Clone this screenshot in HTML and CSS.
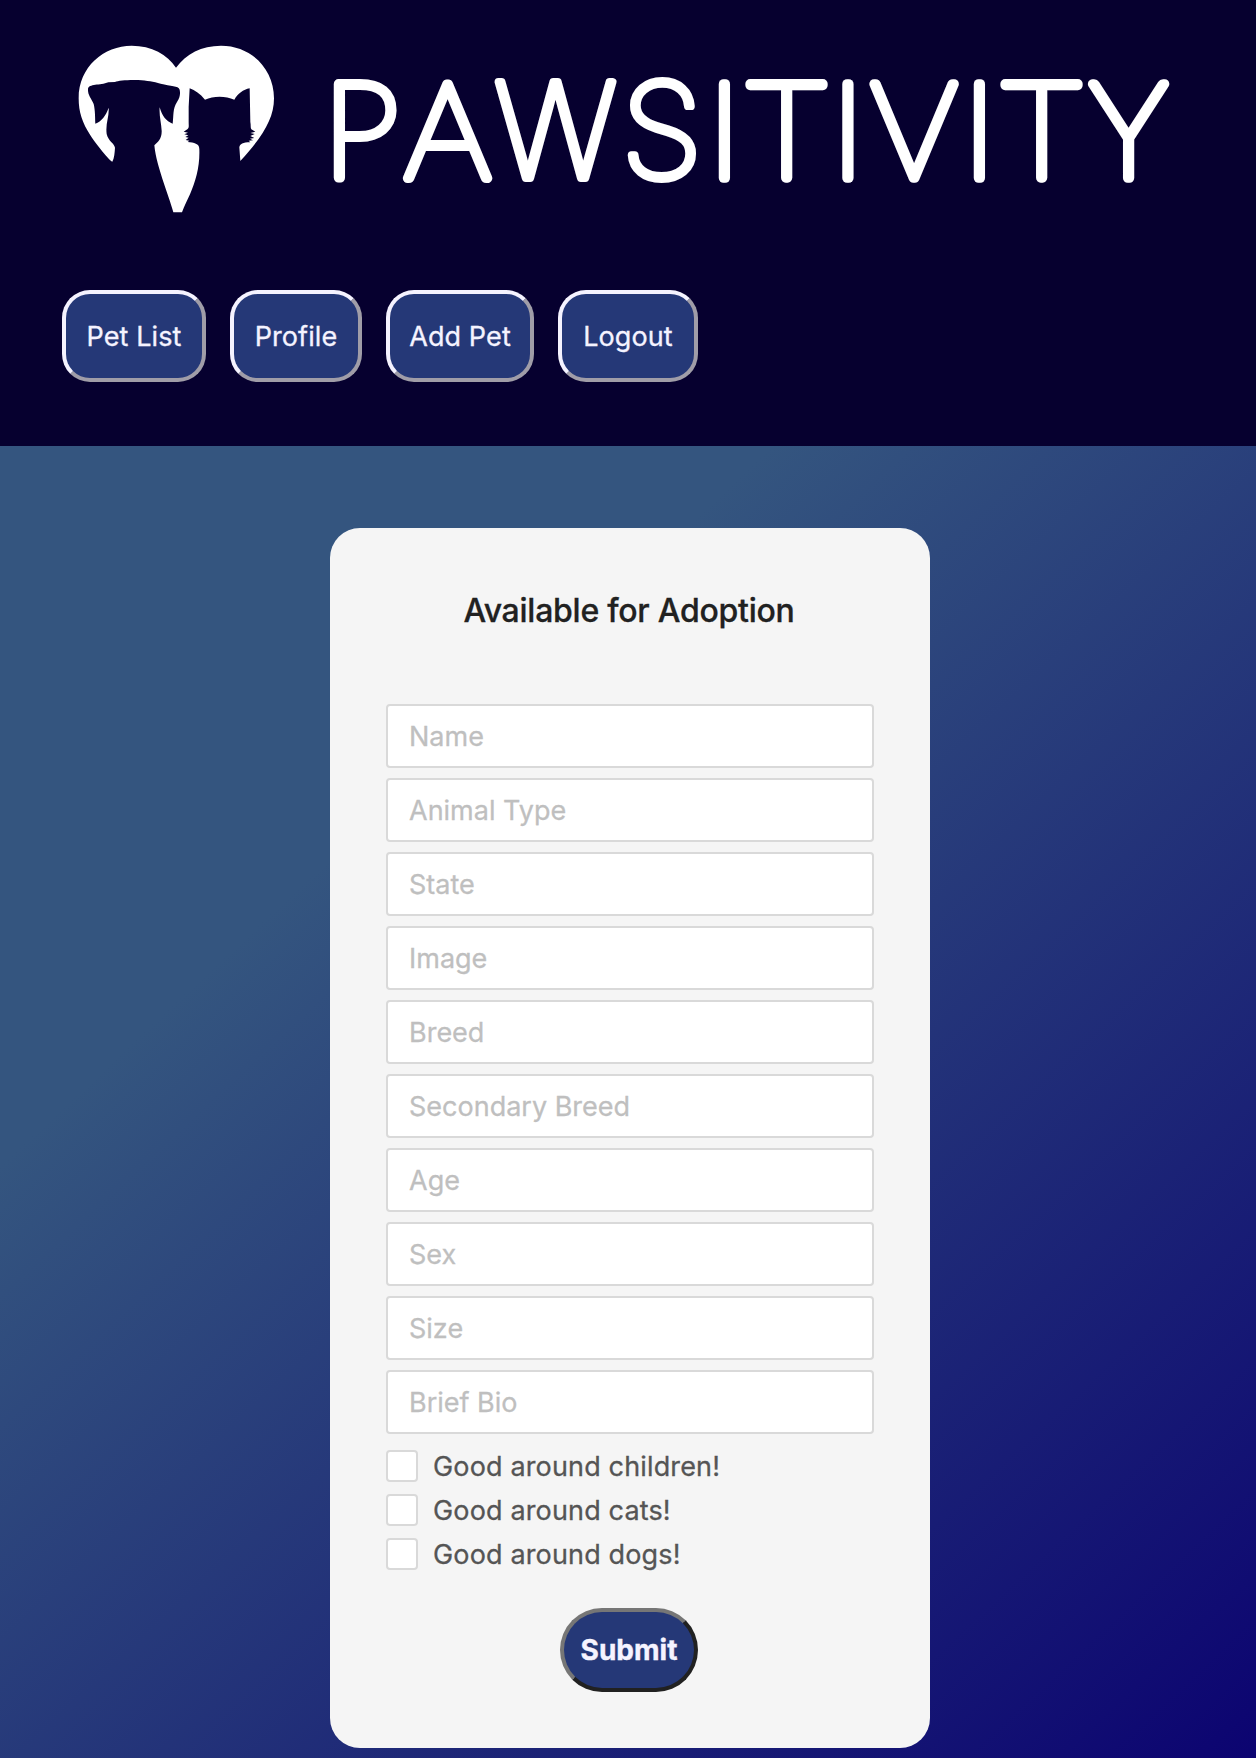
FILE: index.html
```html
<!DOCTYPE html>
<html lang="en">
<head>
<meta charset="utf-8">
<title>Pawsitivity</title>
<link rel="stylesheet" href="styles.css">
</head>
<body>
<header class="header">
  <svg class="logo" viewBox="0 0 1256 230" role="img" aria-label="Pawsitivity">
    <g transform="translate(60 30) scale(.33333)">
      <path fill="#fff" d="M157 395C146 389 112 347 92 317C66 278 56 245 56 205C56 110 132 47 215 47C275 47 322 73 348 113C378 72 425 47 483 47C574 47 642 117 642 205C642 267 607 321 541 393L538 352C540 342 548 337 571 337L566 332L579 331L570 326L583 324L571 318L584 312L571 309L586 305L574 298C571 293 573 286 571 276L569 175C550 179 533 191 523 209C497 197 460 197 435 209C420 191 405 181 389 175L386 230V276C386 288 388 293 382 298L371 305L384 308L373 313L385 316L376 321L386 323L377 330L388 332L383 336C402 338 418 340 418 357C420 410 407 453 390 493C382 510 374 525 366 547H340C333 520 318 480 307 446C297 412 287 385 283 346C294 336 306 326 305 302C304 280 297 255 299 232C306 257 318 274 338 281C341 258 338 235 351 216C361 201 361 190 359 179C355 166 332 169 302 161C280 155 262 152 235 150C205 149 175 151 165 156L145 157C120 167 86 161 84 177C83 197 94 204 101 222C106 242 105 265 106 281C125 274 137 258 146 233C148 260 136 280 140 312C145 334 163 340 165 353C164 368 163 384 157 395Z"/>
    </g>
    <text class="wordmark" y="178" x="360.5 447.5 555.5 662 724.5 786.5 848 914 979.5 1041.5 1128.5">PA<tspan class="narrow">WS</tspan>ITIVITY</text>
  </svg>
  <nav class="nav">
    <a class="nav-button pet-list">Pet List</a>
    <a class="nav-button profile">Profile</a>
    <a class="nav-button add-pet">Add Pet</a>
    <a class="nav-button logout">Logout</a>
  </nav>
</header>
<main class="main">
  <form class="card">
    <h1 class="title">Available for Adoption</h1>
    <div class="fields">
      <input class="field" placeholder="Name">
      <input class="field" placeholder="Animal Type">
      <input class="field" placeholder="State">
      <input class="field" placeholder="Image">
      <input class="field" placeholder="Breed">
      <input class="field" placeholder="Secondary Breed">
      <input class="field" placeholder="Age">
      <input class="field" placeholder="Sex">
      <input class="field" placeholder="Size">
      <input class="field" placeholder="Brief Bio">
    </div>
    <div class="checks">
      <label class="check"><input class="box" type="checkbox"><span>Good around children!</span></label>
      <label class="check"><input class="box" type="checkbox"><span>Good around cats!</span></label>
      <label class="check"><input class="box" type="checkbox"><span>Good around dogs!</span></label>
    </div>
    <button class="submit" type="button">Submit</button>
  </form>
</main>
</body>
</html>
```
FILE: styles.css
```css
* { box-sizing: border-box; }
body {
  margin: 0;
  height: 1758px;
  overflow: hidden;
  font-family: Inter, "Liberation Sans", sans-serif;
  font-size: 27px;
  font-weight: 400;
  background: #0a0070;
}
.header { height: 446px; background: #06002f; }
.logo { display: block; width: 1256px; height: 230px; }
.wordmark {
  font-family: Lato, sans-serif;
  font-size: 134.5px;
  font-weight: 100;
  fill: #fff;
  stroke: #fff;
  stroke-width: 9.6px;
  stroke-linejoin: round;
  text-anchor: middle;
}
.narrow {
  font-family: Inter, sans-serif;
  font-size: 132px;
  stroke-width: 7.8px;
}
.nav { display: flex; gap: 24px; padding: 60px 62px 0; }
.nav-button {
  display: flex;
  align-items: center;
  justify-content: center;
  height: 92px;
  border: 4px solid;
  border-color: #f5f3ff #a09da8 #a09da8 #f5f3ff;
  border-radius: 28px;
  background: #253877;
  color: #f5f3ff;
  letter-spacing: 0.1px;
  -webkit-text-stroke: 0.3px;
}
.pet-list { width: 144px; }
.profile { width: 132px; }
.add-pet { width: 148px; }
.logout { width: 140px; }
.main {
  display: flex;
  justify-content: center;
  height: 1312px;
  padding: 82px 0 0 4px;
  background: linear-gradient(137deg, #34557f 29%, #0a0070 103%);
}
.card {
  display: flex;
  flex-direction: column;
  align-items: center;
  width: 600px;
  height: 1220px;
  padding: 63px 56px 0;
  border-radius: 30px;
  background: #f5f5f5;
}
.title {
  margin: 0 2px 73px 0;
  font-size: 32px;
  font-weight: 500;
  line-height: 40px;
  letter-spacing: -0.25px;
  color: #212121;
  -webkit-text-stroke: 0.3px;
}
.fields { display: flex; flex-direction: column; gap: 10px; width: 100%; }
.field {
  width: 100%;
  height: 64px;
  padding: 0 21px;
  border: 2px solid #d9d9d9;
  border-radius: 4px;
  background: #fff;
  font: 400 27px Inter, sans-serif;
}
.field::placeholder { color: #bfbfbf; opacity: 1; -webkit-text-stroke: 0.3px; }
.checks { display: flex; flex-direction: column; gap: 12px; width: 100%; margin-top: 16px; }
.check {
  display: flex;
  align-items: center;
  gap: 15px;
  height: 32px;
  color: #555;
  letter-spacing: 0.15px;
  -webkit-text-stroke: 0.3px;
}
.box {
  appearance: none;
  width: 32px;
  height: 32px;
  margin: 0;
  border: 2px solid #d9d9d9;
  border-radius: 4px;
  background: #fff;
}
.submit {
  width: 138px;
  height: 84px;
  margin: 38px 2px 0 0;
  padding: 0;
  border: 4px solid;
  border-color: #767676 #212121 #212121 #767676;
  border-radius: 42px;
  background: #253877;
  color: #f5f3ff;
  font: 700 28px Inter, sans-serif;
  -webkit-text-stroke: 0.4px;
}
```
